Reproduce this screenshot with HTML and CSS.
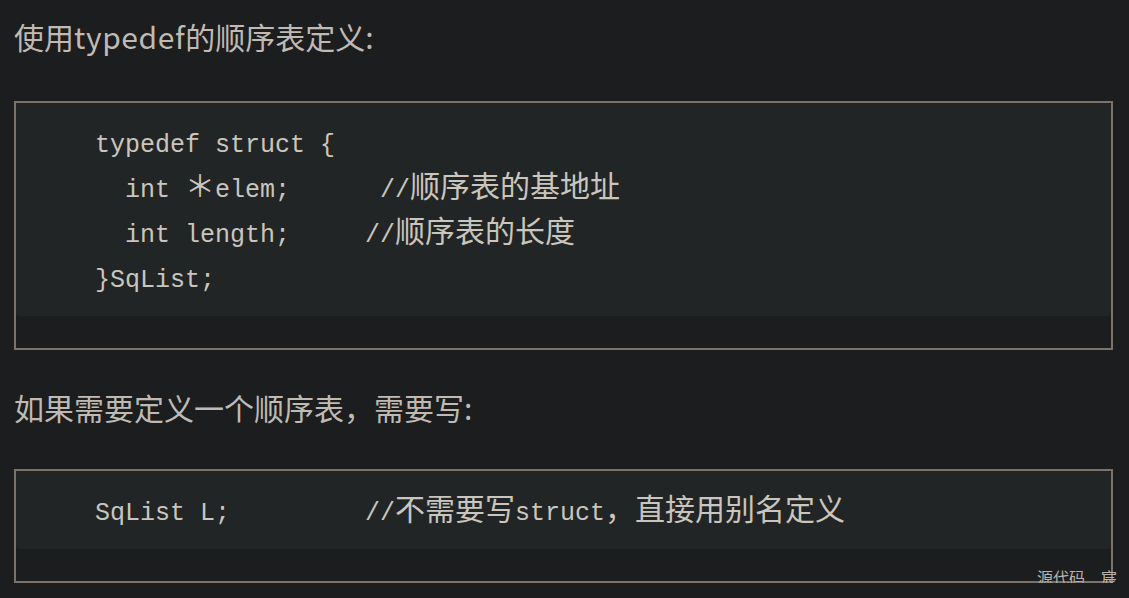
FILE: index.html
```html
<!DOCTYPE html>
<html lang="zh-CN">
<head>
<meta charset="utf-8">
<title>typedef 顺序表</title>
<link rel="stylesheet" href="styles.css">
</head>
<body>
<div class="page">
  <p class="lead lead-first">使用<span class="latin">typedef</span>的顺序表定义:</p>
  <div class="code-box code-box-first">
<pre class="code">typedef struct {
  int <span class="zh">＊</span>elem;      //<span class="zh">顺序表的基地址</span>
  int length;     //<span class="zh">顺序表的长度</span>
}SqList;</pre>
  </div>
  <p class="lead lead-second">如果需要定义一个顺序表，需要写:</p>
  <div class="code-box code-box-second">
<pre class="code">SqList L;         //<span class="zh">不需要写</span>struct<span class="zh">，直接用别名定义</span></pre>
    <div class="watermark">源代码　宸</div>
  </div>
</div>
</body>
</html>
```

FILE: styles.css
```css
html, body {
  margin: 0;
  padding: 0;
  background: #1b1d1e;
}

body {
  color: #bfb9b1;
  font-family: "Noto Sans CJK SC", "Noto Sans", sans-serif;
  overflow: hidden;
}

.page {
  padding: 0 16px 0 14px;
}

.lead {
  margin: 0;
  font-size: 30px;
  line-height: 40px;
  color: #c0bab2;
}

.lead .latin {
  letter-spacing: 0.6px;
}

.lead-first {
  padding-top: 16px;
}

.lead-second {
  margin-top: 37px;
}

.code-box {
  position: relative;
  border: 2px solid #7b7269;
  padding-bottom: 32px;
}

.code-box-first {
  margin-top: 45px;
}

.code-box-second {
  margin-top: 42px;
}

.code {
  margin: 0;
  padding: 20px 16px 13px 79px;
  background: #222526;
  border-radius: 0 4px 4px 4px;
  font-family: "Liberation Mono", "DejaVu Sans Mono", monospace;
  font-size: 25px;
  line-height: 45px;
  color: #cac5bd;
  white-space: pre;
}

.zh {
  display: inline-block;
  font-family: "Noto Sans CJK SC", sans-serif;
  font-size: 30px;
  line-height: 30px;
}

.watermark {
  position: absolute;
  right: -6px;
  bottom: -6px;
  font-size: 16px;
  line-height: 20px;
  color: #b8b2ab;
}
```
